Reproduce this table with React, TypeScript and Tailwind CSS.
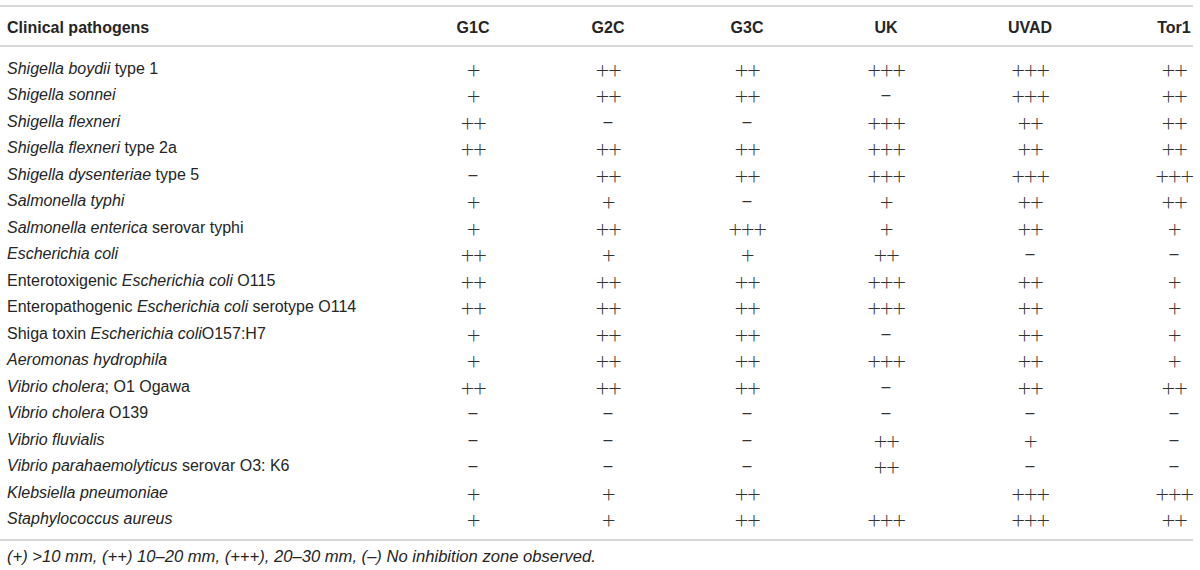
import React from 'react';

type Row = { name: React.ReactNode; vals: string[] };

// the table uses an en dash for "no zone"
const M = '–';

const rows: Row[] = [
  { name: <><i>Shigella boydii</i> type 1</>, vals: ['+', '++', '++', '+++', '+++', '++'] },
  { name: <i>Shigella sonnei</i>, vals: ['+', '++', '++', M, '+++', '++'] },
  { name: <i>Shigella flexneri</i>, vals: ['++', M, M, '+++', '++', '++'] },
  { name: <><i>Shigella flexneri</i> type 2a</>, vals: ['++', '++', '++', '+++', '++', '++'] },
  { name: <><i>Shigella dysenteriae</i> type 5</>, vals: [M, '++', '++', '+++', '+++', '+++'] },
  { name: <i>Salmonella typhi</i>, vals: ['+', '+', M, '+', '++', '++'] },
  { name: <><i>Salmonella enterica</i> serovar typhi</>, vals: ['+', '++', '+++', '+', '++', '+'] },
  { name: <i>Escherichia coli</i>, vals: ['++', '+', '+', '++', M, M] },
  { name: <>Enterotoxigenic <i>Escherichia coli</i> O115</>, vals: ['++', '++', '++', '+++', '++', '+'] },
  { name: <>Enteropathogenic <i>Escherichia coli</i> serotype O114</>, vals: ['++', '++', '++', '+++', '++', '+'] },
  { name: <>Shiga toxin <i>Escherichia coli</i>O157:H7</>, vals: ['+', '++', '++', M, '++', '+'] },
  { name: <i>Aeromonas hydrophila</i>, vals: ['+', '++', '++', '+++', '++', '+'] },
  { name: <><i>Vibrio cholera</i>; O1 Ogawa</>, vals: ['++', '++', '++', M, '++', '++'] },
  { name: <><i>Vibrio cholera</i> O139</>, vals: [M, M, M, M, M, M] },
  { name: <i>Vibrio fluvialis</i>, vals: [M, M, M, '++', '+', M] },
  { name: <><i>Vibrio parahaemolyticus</i> serovar O3: K6</>, vals: [M, M, M, '++', M, M] },
  { name: <i>Klebsiella pneumoniae</i>, vals: ['+', '+', '++', '', '+++', '+++'] },
  { name: <i>Staphylococcus aureus</i>, vals: ['+', '+', '++', '+++', '+++', '++'] },
];

const heads = ['G1C', 'G2C', 'G3C', 'UK', 'UVAD', 'Tor1'];

const grid = 'grid grid-cols-[406px_134px_136px_142px_136px_152px_87px]';

function Mark({ v }: { v: string }) {
  if (v === M) {
    return <span className="block text-[16px] leading-[25px] text-[#333]">{M}</span>;
  }
  return (
    <span className="block text-[24px] leading-[23px] font-light tracking-[-1.5px] text-[#333] font-['Lato',sans-serif]">
      {v}
    </span>
  );
}

export default function App() {
  return (
    <div
      className="w-[1200px] h-[570px] bg-white text-[#252525] text-[16px] leading-none overflow-hidden"
      style={{ fontFamily: '"Liberation Sans", Arial, Helvetica, sans-serif' }}
    >
      <div className="w-[1193px] pt-[5px]">
        <div className={`${grid} h-[42px] pt-[3px] items-center border-y-2 border-[#d6d6d6] font-bold`}>
          <div className="pl-[7px]">Clinical pathogens</div>
          {heads.map((h, i) => (
            <div key={h} className={i === 5 ? 'pl-[49px] text-center' : 'text-center'}>
              {h}
            </div>
          ))}
        </div>

        <div className="pt-[8px] pb-[7px] border-b-2 border-[#d6d6d6]">
          {rows.map((r, ri) => (
            <div key={ri} className={`${grid} h-[26.5px] items-center`}>
              <div className="pl-[7px] pt-[1px] whitespace-nowrap">{r.name}</div>
              {r.vals.map((v, i) => (
                <div key={i} className={i === 5 ? 'pl-[49px] text-center' : 'text-center'}>
                  {v && <Mark v={v} />}
                </div>
              ))}
            </div>
          ))}
        </div>

        <p className="pl-[7px] pt-[8px] italic text-[16.6px]">
          (+) &gt;10 mm, (++) 10–20 mm, (+++), 20–30 mm, (–) No inhibition zone observed.
        </p>
      </div>
    </div>
  );
}
